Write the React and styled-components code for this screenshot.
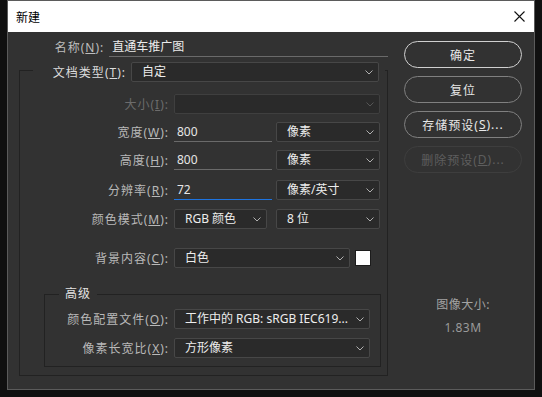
import React from 'react'
import styled, { createGlobalStyle } from 'styled-components'

const GlobalStyle = createGlobalStyle`
  html, body {
    margin: 0;
    padding: 0;
    background: #101010;
  }
  body {
    font-family: "Noto Sans", "Noto Sans CJK SC", sans-serif;
    font-size: 12px;
  }
`

function Chevron() {
  return (
    <ChevronIcon width="8" height="5" viewBox="0 0 8 5">
      <polyline points="0.5,0.5 4,4 7.5,0.5" fill="none" stroke="currentColor" strokeWidth="1" />
    </ChevronIcon>
  )
}

function Key({ children }) {
  return <>(<u>{children}</u>):</>
}

function Dropdown({ w, value, disabled }) {
  return (
    <Select $w={w} $disabled={disabled}>
      <SelectText>{value}</SelectText>
      <Chevron />
    </Select>
  )
}

function App() {
  return (
    <Page>
      <GlobalStyle />
      <Dialog>
        <TitleBar>
          <Title>新建</Title>
          <svg width="11" height="11" viewBox="0 0 11 11">
            <path d="M0.5 0.5 L10.5 10.5 M10.5 0.5 L0.5 10.5" stroke="#111" strokeWidth="1.1" />
          </svg>
        </TitleBar>

        <Body>
          <FormCol>
            <NameRow>
              <NameLabel>名称<Key>N</Key></NameLabel>
              <NameInput>直通车推广图</NameInput>
            </NameRow>

            <Group $mt={1}>
              <MainLegend>
                <LegendLabel>文档类型<Key>T</Key></LegendLabel>
                <Dropdown w={248} value="自定" />
              </MainLegend>

              <Row $lw={154} $mt={12}>
                <Label $disabled>大小<Key>I</Key></Label>
                <Dropdown w={206} value="" disabled />
              </Row>
              <Row $lw={154} $mt={8}>
                <Label>宽度<Key>W</Key></Label>
                <Controls $gap={4}>
                  <TextField $w={98}>800</TextField>
                  <Dropdown w={104} value="像素" />
                </Controls>
              </Row>
              <Row $lw={154} $mt={8}>
                <Label>高度<Key>H</Key></Label>
                <Controls $gap={4}>
                  <TextField $w={98}>800</TextField>
                  <Dropdown w={104} value="像素" />
                </Controls>
              </Row>
              <Row $lw={154} $mt={10}>
                <Label>分辨率<Key>R</Key></Label>
                <Controls $gap={4}>
                  <TextField $w={98} $focus>72</TextField>
                  <Dropdown w={104} value="像素/英寸" />
                </Controls>
              </Row>
              <Row $lw={154} $mt={9}>
                <Label>颜色模式<Key>M</Key></Label>
                <Controls $gap={9}>
                  <Dropdown w={93} value="RGB 颜色" />
                  <Dropdown w={104} value="8 位" />
                </Controls>
              </Row>
              <Row $lw={154} $mt={19}>
                <Label>背景内容<Key>C</Key></Label>
                <Controls $gap={5}>
                  <Dropdown w={176} value="白色" />
                  <Swatch />
                </Controls>
              </Row>

              <SubGroup>
                <SubLegend>高级</SubLegend>
                <Row $lw={129} $mt={7}>
                  <Label>颜色配置文件<Key>O</Key></Label>
                  <Dropdown w={196} value="工作中的 RGB: sRGB IEC619..." />
                </Row>
                <Row $lw={129} $mt={9}>
                  <Label>像素长宽比<Key>X</Key></Label>
                  <Dropdown w={196} value="方形像素" />
                </Row>
              </SubGroup>
            </Group>
          </FormCol>

          <SideCol>
            <Button $primary>确定</Button>
            <Button>复位</Button>
            <Button>存储预设(<u>S</u>)...</Button>
            <Button $disabled>删除预设(<u>D</u>)...</Button>
            <Info>
              <InfoTitle>图像大小:</InfoTitle>
              <InfoValue>1.83M</InfoValue>
            </Info>
          </SideCol>
        </Body>
      </Dialog>
    </Page>
  )
}

export default App

const Page = styled.div`
  width: 542px;
  height: 397px;
  overflow: hidden;
  background: #101010;
`

const Dialog = styled.div`
  margin-left: 7px;
  width: 528px;
  height: 390px;
  box-sizing: border-box;
  border: 1px solid #5b5b5b;
  background: #323232;
  display: flex;
  flex-direction: column;
`

const TitleBar = styled.div`
  height: 31px;
  background: #ffffff;
  display: flex;
  align-items: center;
  justify-content: space-between;
  padding: 0 9px 0 8px;
  flex-shrink: 0;
`

const Title = styled.div`
  color: #000;
  font-size: 12px;
  font-family: "Noto Sans CJK SC", sans-serif;
`

const Body = styled.div`
  flex: 1;
  display: flex;
`

const FormCol = styled.div`
  width: 369px;
  padding: 7px 0 0 11px;
`

const NameRow = styled.div`
  display: flex;
  align-items: flex-end;
  height: 18px;
`

const NameLabel = styled.div`
  width: 86px;
  text-align: right;
  color: #bdbdbd;
  line-height: 18px;
  padding-right: 5px;
  white-space: nowrap;
  letter-spacing: 1px;
`

const NameInput = styled.div`
  width: 278px;
  padding-left: 3px;
  height: 17px;
  line-height: 16px;
  border-bottom: 1px solid #6a6a6a;
  color: #ececec;
`

const Group = styled.fieldset`
  margin: ${p => p.$mt || 0}px 0 0 0;
  padding: 0 0 8px 0;
  border: 1px solid #222222;
  min-width: 0;
`

const MainLegend = styled.legend`
  margin-left: 13px;
  padding: 4px 6px 0 0;
  display: flex;
  align-items: center;
`

const LegendLabel = styled.div`
  width: 92px;
  padding-right: 5px;
  box-sizing: border-box;
  text-align: right;
  color: #dcdcdc;
  white-space: nowrap;
  margin-left: 6px;
  letter-spacing: 1px;
`

const Row = styled.div`
  display: grid;
  grid-template-columns: ${p => p.$lw}px auto;
  align-items: center;
  margin-top: ${p => p.$mt || 0}px;
  height: 20px;
`

const Label = styled.div`
  text-align: right;
  padding-right: 5px;
  color: ${p => (p.$disabled ? '#6c6c6c' : '#b9b9b9')};
  white-space: nowrap;
  letter-spacing: 1px;
`

const Controls = styled.div`
  display: flex;
  align-items: center;
  gap: ${p => p.$gap}px;
`

const Select = styled.div`
  width: ${p => p.$w}px;
  height: 20px;
  box-sizing: border-box;
  border: 1px solid ${p => (p.$disabled ? '#3f3f3f' : '#474747')};
  border-radius: 2px;
  background: #2a2a2a;
  display: flex;
  align-items: center;
  justify-content: space-between;
  padding: 0 5px 0 10px;
  color: ${p => (p.$disabled ? '#555' : '#b0b0b0')};
`

const SelectText = styled.span`
  color: #ededed;
  white-space: nowrap;
  overflow: hidden;
  line-height: 18px;
`

const ChevronIcon = styled.svg`
  flex-shrink: 0;
`

const TextField = styled.div`
  width: ${p => p.$w}px;
  height: 20px;
  box-sizing: border-box;
  padding-left: 3px;
  line-height: 19px;
  color: #e6e6e6;
  border-bottom: 1px solid ${p => (p.$focus ? '#1e74e0' : '#6a6a6a')};
`

const Swatch = styled.div`
  width: 14px;
  height: 14px;
  background: #ffffff;
  border: 1px solid #1c1c1c;
`

const SubGroup = styled.fieldset`
  margin: 18px 6px 0 24px;
  padding: 0 0 8px 0;
  border: 1px solid #222222;
  min-width: 0;
`

const SubLegend = styled.legend`
  margin-left: 14px;
  padding: 0 6px;
  line-height: 16px;
  color: #e2e2e2;
  letter-spacing: 1px;
`

const SideCol = styled.div`
  padding: 9px 0 0 16px;
  width: 118px;
  display: flex;
  flex-direction: column;
  gap: 8px;
`

const Button = styled.div`
  height: 27px;
  box-sizing: border-box;
  border-radius: 14px;
  border: 1px solid ${p => (p.$primary ? '#d0d0d0' : p.$disabled ? '#3e3e3e' : '#808080')};
  color: ${p => (p.$disabled ? '#5e5e5e' : '#e8e8e8')};
  display: flex;
  align-items: center;
  justify-content: center;
  white-space: nowrap;
  letter-spacing: 1px;
`

const Info = styled.div`
  margin-top: 116px;
  text-align: center;
  color: #a3a3a3;
  letter-spacing: 0.5px;
`

const InfoTitle = styled.div`
  line-height: 16px;
`

const InfoValue = styled.div`
  margin-top: 7px;
  line-height: 16px;
  color: #9a9a9a;
`
